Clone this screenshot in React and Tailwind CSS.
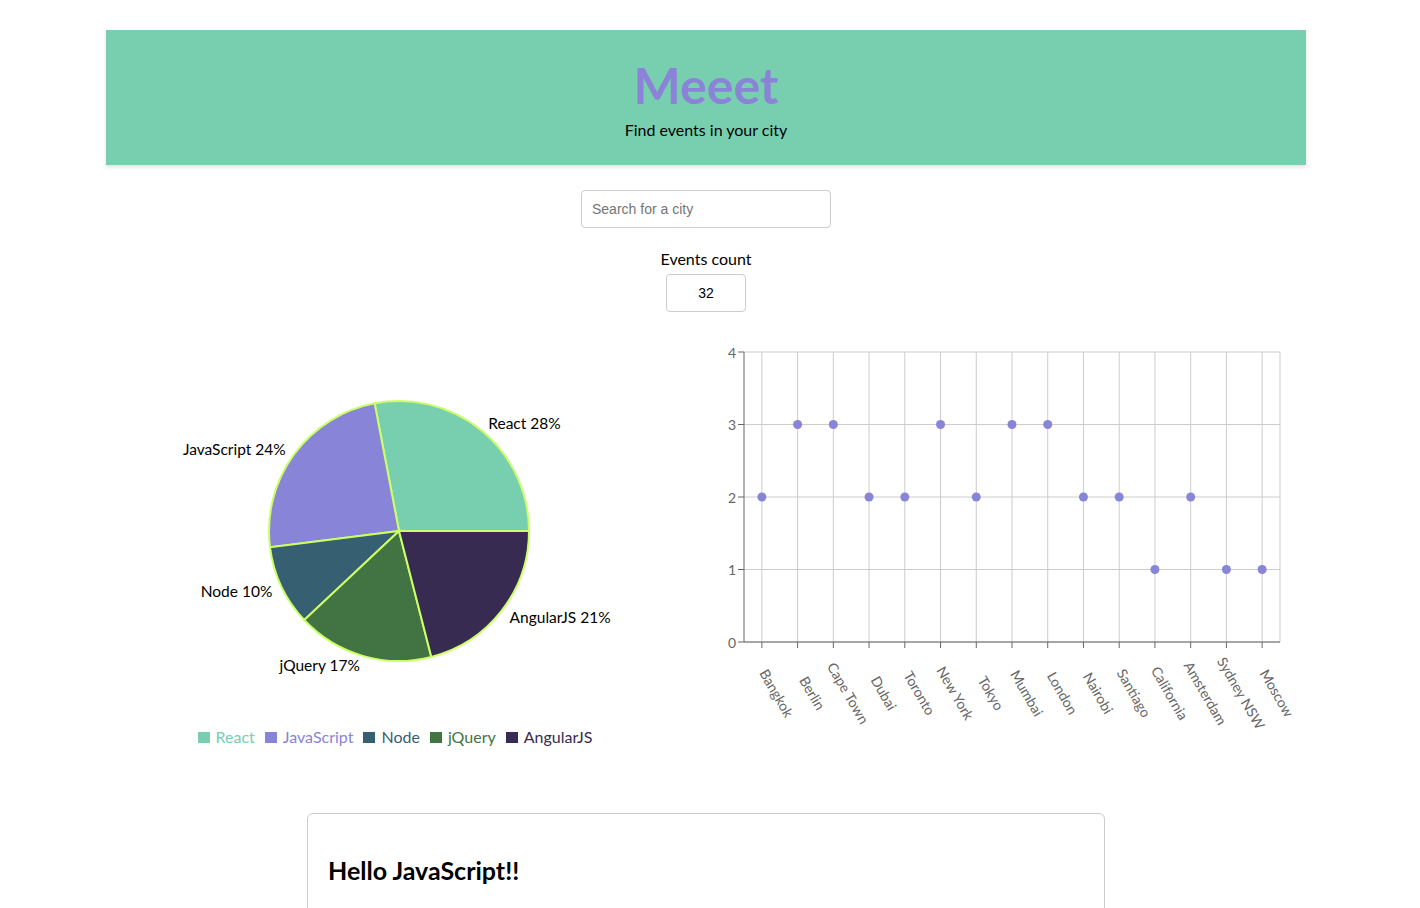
import React from "react";

const PIE = [
  { name: "React", value: 28, color: "#78cfb0" },
  { name: "JavaScript", value: 24, color: "#8884d8" },
  { name: "Node", value: 10, color: "#365f72" },
  { name: "jQuery", value: 17, color: "#417442" },
  { name: "AngularJS", value: 21, color: "#372b51" },
];

const CITIES = [
  ["Bangkok", 2],
  ["Berlin", 3],
  ["Cape Town", 3],
  ["Dubai", 2],
  ["Toronto", 2],
  ["New York", 3],
  ["Tokyo", 2],
  ["Mumbai", 3],
  ["London", 3],
  ["Nairobi", 2],
  ["Santiago", 2],
  ["California", 1],
  ["Amsterdam", 2],
  ["Sydney NSW", 1],
  ["Moscow", 1],
];

const FONT = { fontFamily: "Lato, 'Open Sans', sans-serif" };

function PieChart() {
  const cx = 293;
  const cy = 201;
  const r = 130;
  const total = PIE.reduce((s, d) => s + d.value, 0);
  let start = 0;
  const rad = Math.PI / 180;
  const pt = (a, rr) => [cx + rr * Math.cos(a * rad), cy - rr * Math.sin(a * rad)];
  const slices = PIE.map((d) => {
    const sweep = (d.value / total) * 360;
    const end = start + sweep;
    const [x1, y1] = pt(start, r);
    const [x2, y2] = pt(end, r);
    const large = sweep > 180 ? 1 : 0;
    const path = `M${cx},${cy} L${x1},${y1} A${r},${r} 0 ${large} 0 ${x2},${y2} Z`;
    const mid = start + sweep / 2;
    const [lx, ly] = pt(mid, r + 10);
    const anchor = Math.cos(mid * rad) >= 0 ? "start" : "end";
    start = end;
    return { ...d, path, lx, ly, anchor };
  });
  return (
    <svg width="600" height="390" className="block">
      {slices.map((s) => (
        <path key={s.name} d={s.path} fill={s.color} stroke="#ccff66" strokeWidth="2" />
      ))}
      {slices.map((s) => (
        <text
          key={s.name + "l"}
          x={s.lx}
          y={s.ly}
          textAnchor={s.anchor}
          dominantBaseline="central"
          fontSize="15.5"
          fill="#000"
          style={FONT}
        >
          {s.name} {s.value}%
        </text>
      ))}
    </svg>
  );
}

function ScatterChart() {
  const x0 = 38;
  const x1 = 574;
  const y0 = 22;
  const y1 = 312;
  const band = (x1 - x0) / CITIES.length;
  const xs = CITIES.map((_, i) => x0 + band * (i + 0.5));
  const yOf = (v) => y1 - ((y1 - y0) / 4) * v;
  return (
    <svg width="600" height="410" className="block">
      {[0, 1, 2, 3, 4].map((v) => (
        <line key={"h" + v} x1={x0} x2={x1} y1={yOf(v)} y2={yOf(v)} stroke="#ccc" strokeWidth="1" />
      ))}
      {xs.map((x, i) => (
        <line key={"v" + i} x1={x} x2={x} y1={y0} y2={y1} stroke="#ccc" strokeWidth="1" />
      ))}
      <line x1={x1} x2={x1} y1={y0} y2={y1} stroke="#ccc" strokeWidth="1" />
      <line x1={x0} x2={x0} y1={y0} y2={y1} stroke="#666" strokeWidth="1" />
      <line x1={x0} x2={x1} y1={y1} y2={y1} stroke="#666" strokeWidth="1" />
      {[0, 1, 2, 3, 4].map((v) => (
        <g key={"yt" + v}>
          <line x1={x0 - 6} x2={x0} y1={yOf(v)} y2={yOf(v)} stroke="#666" />
          <text
            x={x0 - 8}
            y={yOf(v)}
            textAnchor="end"
            dominantBaseline="central"
            fontSize="14"
            fill="#666"
            style={FONT}
          >
            {v}
          </text>
        </g>
      ))}
      {xs.map((x, i) => (
        <g key={"xt" + i}>
          <line x1={x} x2={x} y1={y1} y2={y1 + 6} stroke="#666" />
          <text
            x={x + 15}
            y={363}
            textAnchor="middle"
            dominantBaseline="central"
            fontSize="14"
            fill="#666"
            transform={`rotate(60 ${x + 15} 363)`}
            style={FONT}
          >
            {CITIES[i][0]}
          </text>
        </g>
      ))}
      {xs.map((x, i) => (
        <circle key={"d" + i} cx={x} cy={yOf(CITIES[i][1])} r="4.5" fill="#8884d8" />
      ))}
    </svg>
  );
}

export default function App() {
  return (
    <div className="min-h-[908px] w-[1412px] bg-white" style={FONT}>
      <div className="mx-auto w-[1200px] pt-[30px]">
        <header className="flex h-[135px] flex-col items-center bg-[#78cfb0] pt-[28px] shadow-[0_2px_4px_rgba(0,0,0,0.12)]">
          <h1 className="text-[50px] font-bold leading-[54px] text-[#8b83d8]">Meeet</h1>
          <p className="mt-[7px] text-[16px] leading-[22px] text-black">Find events in your city</p>
        </header>

        <div className="mt-[25px] flex flex-col items-center">
          <input
            type="text"
            placeholder="Search for a city"
            className="h-[38px] w-[250px] rounded-[4px] border border-[#ccc] px-[10px] text-[14px] text-black outline-none placeholder:text-[#757575]"
            style={{ fontFamily: "'Liberation Sans', Arial, sans-serif" }}
          />
          <label className="mt-[20px] text-[16px] leading-[22px] text-black">Events count</label>
          <input
            type="text"
            defaultValue="32"
            className="mt-[4px] h-[38px] w-[80px] rounded-[4px] border border-[#ccc] text-center text-[14px] text-black outline-none"
            style={{ fontFamily: "'Liberation Sans', Arial, sans-serif" }}
          />
        </div>

        <div className="mt-[18px] flex">
          <div className="w-[600px]">
            <PieChart />
            <div className="flex h-[34px] items-center justify-center gap-[10px] pr-[22px] text-[16px]">
              {PIE.map((d) => (
                <div key={d.name} className="flex items-center gap-[6px]" style={{ color: d.color }}>
                  <span className="inline-block h-[11px] w-[12px]" style={{ backgroundColor: d.color }} />
                  <span>{d.name}</span>
                </div>
              ))}
            </div>
          </div>
          <div className="w-[600px]">
            <ScatterChart />
          </div>
        </div>

        <div className="mx-auto mt-[59px] w-[798px] rounded-[6px] border border-[#ccc] px-[20px] pt-[38px] pb-[40px]">
          <h2 className="text-[25px] font-bold leading-[36px] text-black">Hello JavaScript!!</h2>
        </div>
      </div>
    </div>
  );
}
